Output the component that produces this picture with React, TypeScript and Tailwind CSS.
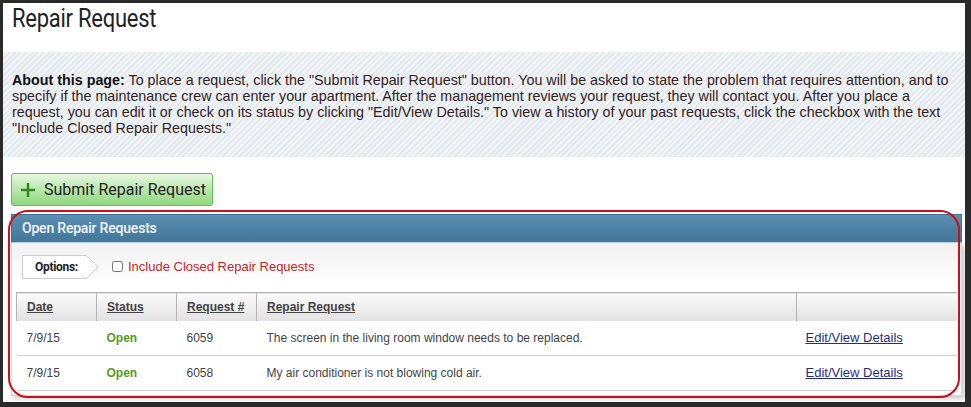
// Repair Request page: intro, submit button and the open requests panel
import React from "react";

const rows = [
  { date: "7/9/15", status: "Open", id: "6059", text: "The screen in the living room window needs to be replaced." },
  { date: "7/9/15", status: "Open", id: "6058", text: "My air conditioner is not blowing cold air." },
];

function OptionsTag() {
  return (
    <div className="relative w-[77px] h-[24px] flex items-center">
      <svg className="absolute inset-0" width="77" height="24" viewBox="0 0 77 24">
        <polygon points="0.5,0.5 64.5,0.5 76,12 64.5,23.5 0.5,23.5" fill="#fff" stroke="#cfcfcf" />
      </svg>
      <span className="relative pl-[13px] text-[12px] font-bold tracking-[-0.3px] text-[#222] font-['Roboto',sans-serif]">
        Options:
      </span>
    </div>
  );
}

export default function App() {
  return (
    <div className="min-h-screen bg-[#2a2a2a] pt-[3px] pl-[3px]">
      <div className="w-[962px] h-[399px] bg-white overflow-hidden">
        <div className="h-[49px] pl-[9px] pt-[1px]">
          <h1 className="origin-left scale-x-[0.88] text-[25px] leading-[30px] font-normal tracking-[-0.3px] text-[#222] font-['Roboto',sans-serif]">
            Repair Request
          </h1>
        </div>

        <div className="h-[105px] bg-[repeating-linear-gradient(135deg,#e4eaee_0px,#e4eaee_2px,#f1f4f6_2px,#f1f4f6_4px)] pl-[9px] pt-[20px]">
          <p className="whitespace-nowrap text-[14.3px] leading-[16px] text-[#332222] font-['Liberation_Sans',Arial,sans-serif]">
            <b className="text-[#111]">About this page:</b> To place a request, click the "Submit Repair Request" button. You will be asked to state the problem that requires attention, and to
            <br />
            specify if the maintenance crew can enter your apartment. After the management reviews your request, they will contact you. After you place a
            <br />
            request, you can edit it or check on its status by clicking "Edit/View Details." To view a history of your past requests, click the checkbox with the text
            <br />
            "Include Closed Repair Requests."
          </p>
        </div>

        <div className="pl-[8px] pt-[16px]">
          <button className="w-[202px] h-[33px] flex items-center gap-[9px] pl-[9px] rounded-[3px] border border-[#5fbf5a] bg-[linear-gradient(#e6f7e0,#b5e6a8_55%,#8fd67e)] text-[16px] text-[#222] font-['Roboto',sans-serif]">
            <svg width="14" height="14" viewBox="0 0 14 14">
              <path d="M7 0v14M0 7h14" stroke="#2f8a1e" strokeWidth="2.4" />
            </svg>
            Submit Repair Request
          </button>
        </div>

        <div className="relative ml-[8px] mt-[8px] w-[951px]">
          <div className="h-[29px] flex items-center pl-[10px] border border-[#3d7195] border-b-[#b7d2e3] bg-[linear-gradient(#5c8fb2,#4a7fa3_60%,#437799)] text-[14px] font-medium text-[#f2f6fa] font-['Roboto',sans-serif] tracking-[-0.2px]">
            Open Repair Requests
          </div>
          <div className="h-[153px] border-x border-b border-[#d6d6d6] bg-[linear-gradient(#f1f1f1,#ffffff_40px)] shadow-[3px_3px_4px_rgba(0,0,0,0.18)] px-[4px]">
            <div className="flex items-center h-[49px] pl-[6px] pb-[2px]">
              <OptionsTag />
              <label className="flex items-center ml-[13px] gap-[5px] text-[13px] text-[#c4242c] font-['Liberation_Sans',Arial,sans-serif]">
                <input type="checkbox" className="w-[11px] h-[11px] m-0 accent-[#888]" />
                Include Closed Repair Requests
              </label>
            </div>
            <table className="w-[941px] border-collapse text-[12px] text-[#444] font-['Liberation_Sans',Arial,sans-serif]">
              <thead>
                <tr className="h-[28px] bg-[linear-gradient(#fbfbfb,#e2e2e2)] border-t border-[#b4b4b4]">
                  <th className="w-[80px] text-left pl-[10px] font-bold underline border-l border-[#b4b4b4]">Date</th>
                  <th className="w-[80px] text-left pl-[10px] font-bold underline border-l border-[#b4b4b4]">Status</th>
                  <th className="w-[80px] text-left pl-[10px] font-bold underline border-l border-[#b4b4b4]">Request #</th>
                  <th className="w-[540px] text-left pl-[10px] font-bold underline border-l border-[#b4b4b4]">Repair Request</th>
                  <th className="border-l border-[#b4b4b4]"></th>
                </tr>
              </thead>
              <tbody>
                {rows.map((r) => (
                  <tr key={r.id} className="h-[35px] border-b border-[#cfcfcf] bg-white">
                    <td className="pl-[10px]">{r.date}</td>
                    <td className="pl-[10px] font-bold text-[#5a9a24]">{r.status}</td>
                    <td className="pl-[10px]">{r.id}</td>
                    <td className="pl-[10px]">{r.text}</td>
                    <td className="pl-[9px]">
                      <a href="#" className="text-[13px] text-[#1f2e86] underline">Edit/View Details</a>
                    </td>
                  </tr>
                ))}
              </tbody>
            </table>
          </div>
          <div className="absolute left-[-3px] top-[-4px] w-[952px] h-[188px] rounded-[20px] border-2 border-[#c8101a] pointer-events-none"></div>
        </div>
      </div>
    </div>
  );
}
